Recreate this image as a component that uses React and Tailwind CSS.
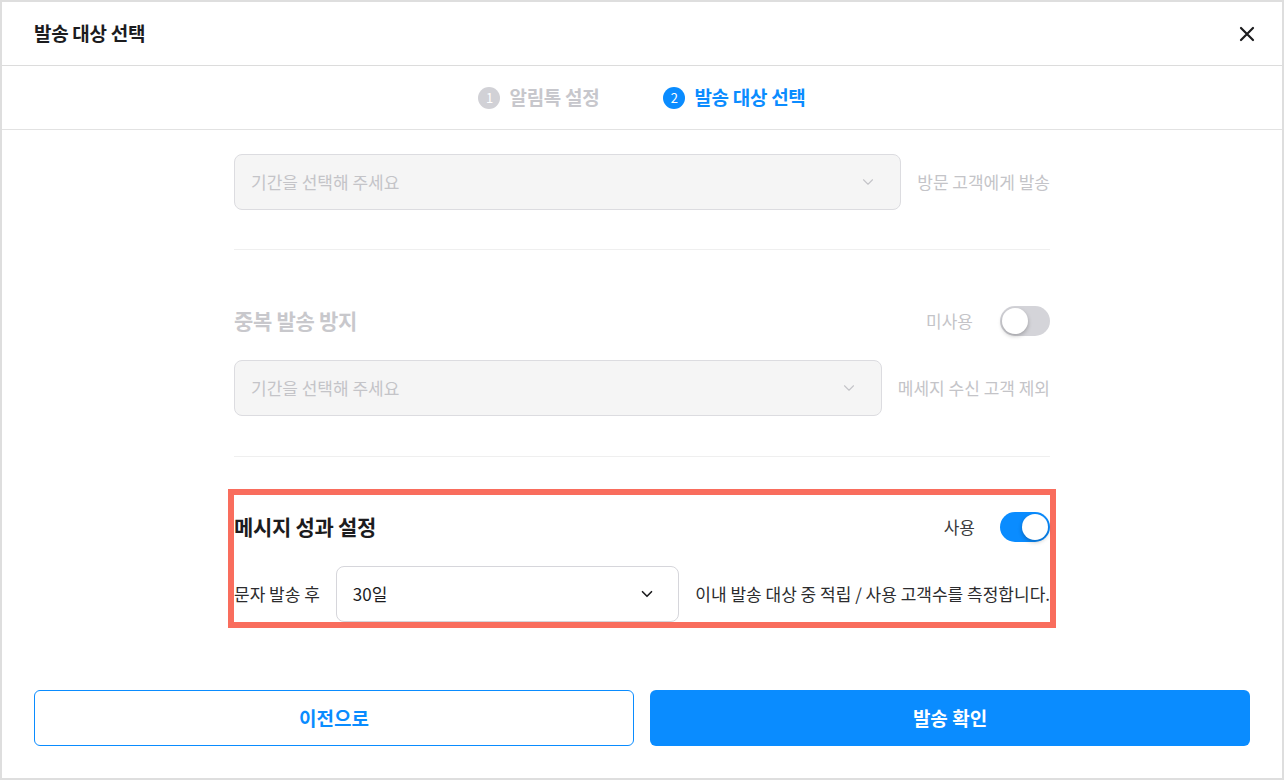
import { ChevronDown } from "lucide-react";

const font = { fontFamily: '"Noto Sans CJK KR", "Noto Sans", sans-serif' };

function Toggle({ on }) {
  return (
    <div
      className={`relative w-[50px] h-[30px] rounded-full ${
        on ? "bg-[#0a8cff]" : "bg-[#d4d4d9]"
      }`}
    >
      <span
        className={`absolute top-[2px] w-[26px] h-[26px] rounded-full bg-white shadow-[0_2px_4px_rgba(0,0,0,0.25)] ${
          on ? "left-[22px]" : "left-[2px]"
        }`}
      />
    </div>
  );
}

function DisabledSelect({ label }) {
  return (
    <div className="flex items-center gap-4">
      <div className="flex-1 h-[56px] flex items-center justify-between px-4 rounded-lg border border-[#dcdce0] bg-[#f5f5f5]">
        <span className="text-[17px] text-[#c4c4c8]">기간을 선택해 주세요</span>
        <ChevronDown className="w-[18px] h-[18px] text-[#c4c4c8] mr-[7px]" strokeWidth={1.5} />
      </div>
      <span className="text-[17px] text-[#c4c4c8] whitespace-nowrap">{label}</span>
    </div>
  );
}

export default function App() {
  return (
    <div
      className="h-[780px] w-full flex flex-col border-2 border-[#dedede] bg-white"
      style={font}
    >
      {/* Header */}
      <div className="h-[64px] shrink-0 flex items-center justify-between pl-[32px] pr-[25px] border-b border-[#dcdcdc]">
        <h1 className="text-[19px] font-bold text-[#1c1c1e] tracking-[-0.3px]">발송 대상 선택</h1>
        <svg width="20" height="20" viewBox="0 0 20 20" className="text-[#1c1c1e]">
          <path d="M4 4 L16 16 M16 4 L4 16" stroke="currentColor" strokeWidth="2.2" strokeLinecap="round" />
        </svg>
      </div>

      {/* Stepper */}
      <div className="h-[64px] shrink-0 flex items-center justify-center gap-[64px] border-b border-[#e2e2e2]">
        <div className="flex items-center gap-[9px]">
          <span className="w-[22px] h-[22px] rounded-full bg-[#d1d1d6] text-white text-[13px] flex items-center justify-center">
            1
          </span>
          <span className="text-[19px] font-bold text-[#c7c7cc] tracking-[-0.3px]">알림톡 설정</span>
        </div>
        <div className="flex items-center gap-[9px]">
          <span className="w-[22px] h-[22px] rounded-full bg-[#0a8cff] text-white text-[13px] flex items-center justify-center">
            2
          </span>
          <span className="text-[19px] font-bold text-[#0a8cff] tracking-[-0.3px]">발송 대상 선택</span>
        </div>
      </div>

      {/* Body */}
      <div className="flex-1">
        <div className="w-[816px] mx-auto pt-[24px]">
          <DisabledSelect label="방문 고객에게 발송" />
          <div className="mt-[39px] h-px bg-[#efefef]" />

          <div className="mt-[56px] h-[30px] flex items-center justify-between">
            <h2 className="text-[21px] font-bold text-[#c8c8cc] tracking-[-0.3px]">중복 발송 방지</h2>
            <div className="flex items-center gap-[27px]">
              <span className="text-[17px] text-[#c4c4c8]">미사용</span>
              <Toggle on={false} />
            </div>
          </div>
          <div className="mt-[24px]">
            <DisabledSelect label="메세지 수신 고객 제외" />
          </div>
          <div className="mt-[40px] h-px bg-[#efefef]" />

          {/* Highlighted section */}
          <div className="mt-[38px] pt-[17px] outline-6 outline-[#f96d5d]">
            <div className="h-[30px] flex items-center justify-between">
              <h2 className="text-[21px] font-bold text-[#1c1c1e] tracking-[-0.3px]">메시지 성과 설정</h2>
              <div className="flex items-center gap-[25px]">
                <span className="text-[17px] text-[#3a3a3c]">사용</span>
                <Toggle on />
              </div>
            </div>
            <div className="mt-[24px] flex items-center gap-4">
              <span className="text-[17px] text-[#2c2c2e] whitespace-nowrap">문자 발송 후</span>
              <div className="flex-1 h-[56px] flex items-center justify-between px-4 rounded-lg border border-[#d6d6db] bg-white">
                <span className="text-[17px] text-[#1c1c1e]">30일</span>
                <ChevronDown className="w-[18px] h-[18px] text-[#1c1c1e] mr-[6px]" strokeWidth={2.2} />
              </div>
              <span className="text-[17px] text-[#2c2c2e] whitespace-nowrap">
                이내 발송 대상 중 적립 / 사용 고객수를 측정합니다.
              </span>
            </div>
          </div>
        </div>
      </div>

      {/* Footer */}
      <div className="shrink-0 grid grid-cols-2 gap-4 px-[32px] pb-[32px]">
        <button className="h-[56px] rounded-md border border-[#0a8cff] bg-white text-[19px] font-bold text-[#0a8cff]">
          이전으로
        </button>
        <button className="h-[56px] rounded-md bg-[#0a8cff] text-[19px] font-bold text-white">
          발송 확인
        </button>
      </div>
    </div>
  );
}
